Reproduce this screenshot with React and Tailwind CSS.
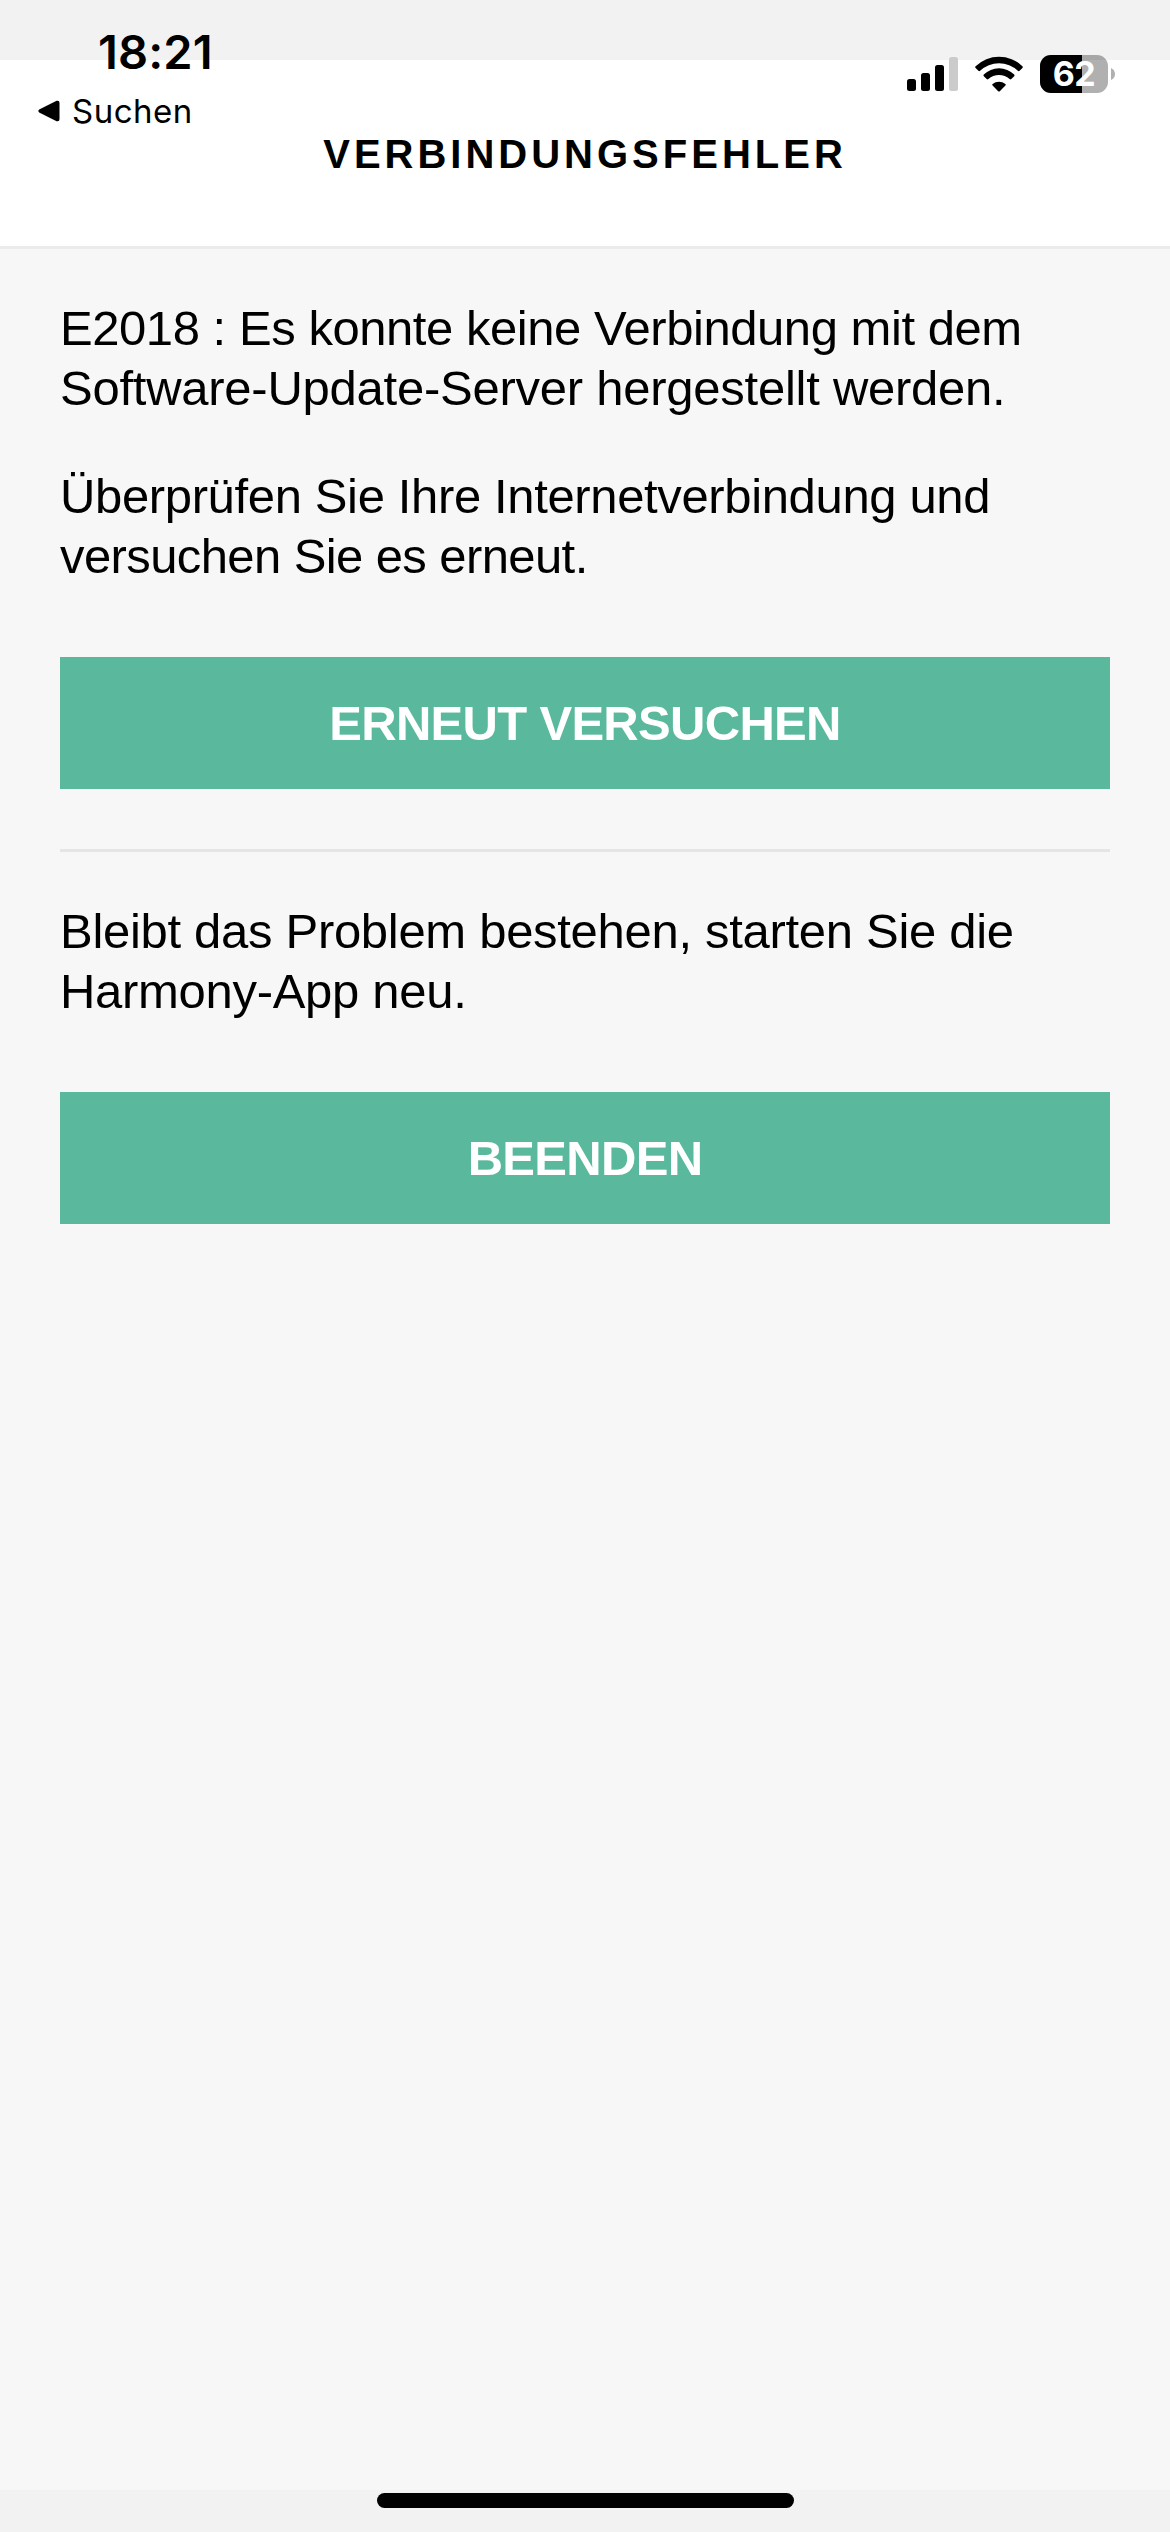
import { useState } from 'react';

const SignalIcon = () => (
  <svg width="51" height="34" viewBox="0 0 51 34">
    <rect x="0" y="22" width="9" height="12" rx="2.5" />
    <rect x="14" y="16" width="9" height="18" rx="2.5" />
    <rect x="28" y="8" width="9" height="26" rx="2.5" />
    <rect x="42" y="0" width="9" height="34" rx="2.5" fill="#cbcbcb" />
  </svg>
);

const WifiIcon = () => (
  <svg width="48" height="36" viewBox="0 0 48 36">
    <path d="M0.6 10.2 A33.5 33.5 0 0 1 47.4 10.2 Q48.3 11.1 47.4 12 L44.6 14.8 Q43.8 15.6 42.9 14.8 A27.5 27.5 0 0 0 5.1 14.8 Q4.2 15.6 3.4 14.8 L0.6 12 Q-0.3 11.1 0.6 10.2Z" />
    <path d="M8.8 18.6 A21.6 21.6 0 0 1 39.2 18.6 Q40 19.5 39.2 20.3 L36.3 23.1 Q35.5 23.9 34.6 23.1 A15.6 15.6 0 0 0 13.4 23.1 Q12.5 23.9 11.7 23.1 L8.8 20.3 Q8 19.5 8.8 18.6Z" />
    <path d="M17.6 27.9 A10.2 10.2 0 0 1 30.4 27.9 Q31.3 28.7 30.4 29.6 L24.8 35.2 Q24 36 23.2 35.2 L17.6 29.6 Q16.7 28.7 17.6 27.9Z" />
  </svg>
);

const Battery = ({ level }) => (
  <div className="flex items-center gap-[3px]">
    <div className="relative flex h-[38px] w-[68px] items-center justify-center rounded-[11px] bg-black/31">
      <div className="absolute inset-y-0 left-0 rounded-l-[11px] bg-black" style={{ width: `${level}%` }} />
      <span className="relative font-['Inter',sans-serif] text-[34px] leading-[38px] font-bold tracking-[-0.5px] text-white">
        {level}
      </span>
    </div>
    <svg width="4" height="12" viewBox="0 0 4 12">
      <path d="M0 0 Q4 2 4 6 Q4 10 0 12Z" fill="#b0b0b0" />
    </svg>
  </div>
);

const StatusBar = () => (
  <div className="absolute inset-x-0 top-0 flex items-start justify-between pr-[55px] pl-[38px] font-['Inter',sans-serif]">
    <div className="flex flex-col">
      <span className="mt-[24px] ml-[60px] text-[47px] leading-[56px] font-semibold tracking-[0.1px]">18:21</span>
      <div className="mt-[11px] flex items-center gap-[12px]">
        <svg width="22" height="22" viewBox="0 0 22 22">
          <path d="M1.2 9.4 L18.6 0.8 Q21.5 0 21.5 3 L21.5 19 Q21.5 22 18.6 21.2 L1.2 12.4 Q-0.5 10.9 1.2 9.4Z" />
        </svg>
        <span className="text-[33px] leading-[40px] tracking-[0.5px]">Suchen</span>
      </div>
    </div>
    <div className="mt-[55px] flex items-center">
      <SignalIcon />
      <div className="mr-[17px] ml-[17px]">
        <WifiIcon />
      </div>
      <Battery level={62} />
    </div>
  </div>
);

const ActionButton = ({ children, onClick }) => (
  <button
    onClick={onClick}
    className="mt-[71px] flex h-[132px] w-full items-center justify-center text-[49px] leading-[60px] font-bold tracking-[-0.7px] text-white bg-[#5ab99d]"
  >
    {children}
  </button>
);

const App = () => {
  const [closed, setClosed] = useState(false);
  const [, setAttempts] = useState(0);

  if (closed) return null;

  return (
    <div className="relative flex h-[2532px] w-[1170px] flex-col bg-[#f7f7f7] font-['Liberation_Sans',sans-serif] text-black">
      <div className="h-[60px] bg-[#f2f2f2]" />
      <header className="flex h-[189px] items-start justify-center border-b-[3px] border-[#ebebeb] bg-white pt-[71px]">
        <h1 className="text-[40px] leading-[46px] font-bold tracking-[4px]">VERBINDUNGSFEHLER</h1>
      </header>

      <main className="flex-1 px-[60px] pt-[49px] text-[49px] leading-[60px]">
        <p>
          <span className="tracking-[-0.45px]">E2018 : Es konnte keine Verbindung mit dem</span>
          <br />
          <span className="tracking-[-0.25px]">Software-Update-Server hergestellt werden.</span>
        </p>
        <p className="mt-12">
          <span className="tracking-[-0.36px]">Überprüfen Sie Ihre Internetverbindung und</span>
          <br />
          <span className="tracking-[-0.6px]">versuchen Sie es erneut.</span>
        </p>
        <ActionButton onClick={() => setAttempts((n) => n + 1)}>ERNEUT VERSUCHEN</ActionButton>

        <hr className="mt-[60px] mb-[49px] border-t-[3px] border-[#e5e5e5]" />

        <p className="tracking-[-0.3px]">
          Bleibt das Problem bestehen, starten Sie die
          <br />
          Harmony-App neu.
        </p>
        <ActionButton onClick={() => setClosed(true)}>BEENDEN</ActionButton>
      </main>

      {/* Home indicator */}
      <footer className="flex h-[42px] justify-center bg-[#f2f2f2] pt-[3px]">
        <div className="h-[15px] w-[417px] rounded-full bg-black" />
      </footer>

      <StatusBar />
    </div>
  );
};

export default App;
